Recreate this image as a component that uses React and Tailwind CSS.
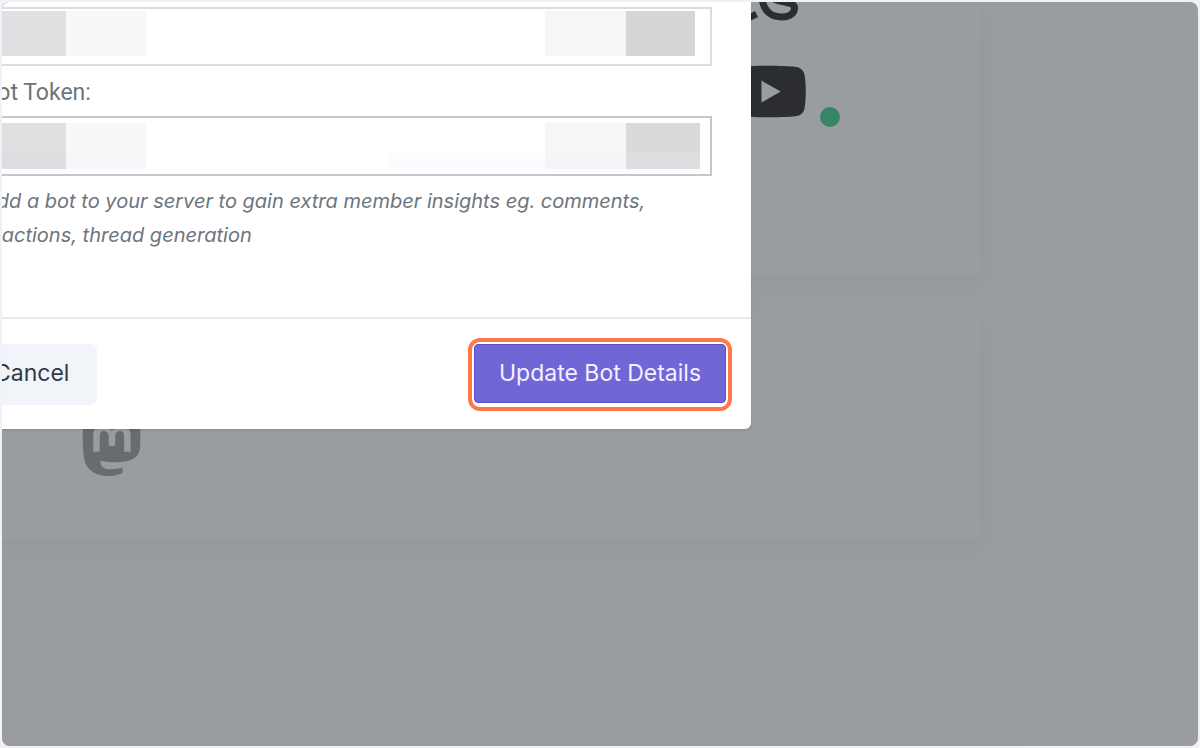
import React from 'react';
import { FaYoutube } from 'react-icons/fa';
import { SiMastodon } from 'react-icons/si';

const Threads = () => (
    <svg viewBox="0 0 56 20" className="mr-10 h-5 w-14 text-[#2b2d32]" aria-hidden="true">
        <path d="M0 15 L11 9 L14 15 L4 20 L0 20 Z" fill="currentColor" />
        <path d="M18 -3 C20 10 28 15 38 15 C47 15 51 10 50.5 5 C49 0 39 1 30 -3" fill="none" stroke="currentColor" strokeWidth="7" />
    </svg>
);

// Input with its value hidden behind pixelated blocks
const MaskedInput = ({ id, label, className, children }) => (
    <div className={`relative flex items-start border-2 pr-[10px] ${className}`}>
        <input id={id} type="text" aria-label={label} className="absolute inset-0 w-full bg-transparent px-4 outline-none" />
        {children}
    </div>
);

const Dialog = () => (
    <div role="dialog" aria-label="Bot details" className="absolute top-0 -left-[68px] w-[817px] rounded-br-md bg-white shadow-sm">
        <div className="pt-[5px] pr-[39px] pb-[65px] pl-[49px]">
            <MaskedInput id="client-id" label="Client ID" className="h-[59px] border-[#d8dde1] pt-0.5">
                <span className="h-[45px] w-[81px] bg-[#dfe0e1]" />
                <span className="h-[45px] w-20 bg-[#f8f8f8]" />
                <span className="flex-1" />
                <span className="h-[45px] w-[81px] bg-[#f6f6f6]" />
                <span className="mr-[5px] h-[45px] w-[69px] bg-[#d5d6d7]" />
            </MaskedInput>
            <label htmlFor="bot-token" className="block pt-2.5 pb-1.5 font-[Roboto,sans-serif] text-[23px] leading-[34px] text-[#6c757d]">Bot Token:</label>
            <MaskedInput id="bot-token" className="h-[60px] border-[#c2c7cd] pt-[5px]">
                <span className="h-[46px] w-[81px] bg-linear-to-b from-[#dfe0e1] from-65% to-[#dcddde] to-65%" />
                <span className="h-[46px] w-20 bg-linear-to-b from-[#f8f8f9] from-65% to-[#f4f6f8] to-65%" />
                <span className="flex-1" />
                <span className="h-[46px] w-[158px] bg-linear-to-b from-white from-65% to-[#fcfcfe] to-65%" />
                <span className="h-[46px] w-[81px] bg-linear-to-b from-[#f6f6f8] from-65% to-[#f5f5f7] to-65%" />
                <span className="h-[46px] w-[74px] bg-linear-to-b from-[#d9dadb] from-65% to-[#dddee0] to-65%" />
            </MaskedInput>
            <p className="pt-2 text-[20px] leading-[34px] text-[#6c757d] italic">
                Add a bot to your server to gain extra member insights eg. comments,<br />
                reactions, thread generation
            </p>
        </div>
        <div className="flex items-center justify-between border-t-2 border-[#e6eaed] pt-[19px] pr-[19px] pb-[18px] pl-8">
            <button type="button" className="h-[61px] rounded-md bg-[#f1f5f9] px-7 pb-0.5 text-[23px] text-[#323a46]">Cancel</button>
            <div className="rounded-xl border-4 border-[#ff7846] px-0.5 pt-0.5 pb-1">
                <button type="button" className="block h-[59px] w-[252px] rounded border border-[#5b4dcb] bg-[#7066d6] text-[23px] text-[#f3f1ff]">
                    Update Bot Details
                </button>
            </div>
        </div>
    </div>
);

const App = () => (
    <div className="h-screen bg-[#f1f1f6] p-0.5 font-[Inter,sans-serif]">
        <div className="relative h-full overflow-hidden rounded-lg bg-[#999ca0]">
            <main className="flex h-full w-[1016px] flex-col gap-[38px] border-r-2 border-[#979a9e] bg-[#989b9f] pr-9">
                <section className="flex h-[273px] flex-col items-end gap-[33px] rounded-br bg-[#999ca0] pr-[140px] shadow-[0_10px_30px_rgba(0,0,0,0.02)]">
                    <Threads />
                    <div className="flex items-center">
                        <FaYoutube className="mr-3 h-[69px] w-[78px] text-[#2b2d32]" />
                        <span className="mt-[52px] size-5 rounded-full bg-[#378565]" />
                    </div>
                </section>
                <section className="h-[227px] rounded-r bg-[#999ca0] pt-[102px] pl-[79px] shadow-[0_10px_30px_rgba(0,0,0,0.02)]">
                    <SiMastodon className="size-[61px] text-[#686b70]" />
                </section>
            </main>
            <Dialog />
        </div>
    </div>
);

export default App;
